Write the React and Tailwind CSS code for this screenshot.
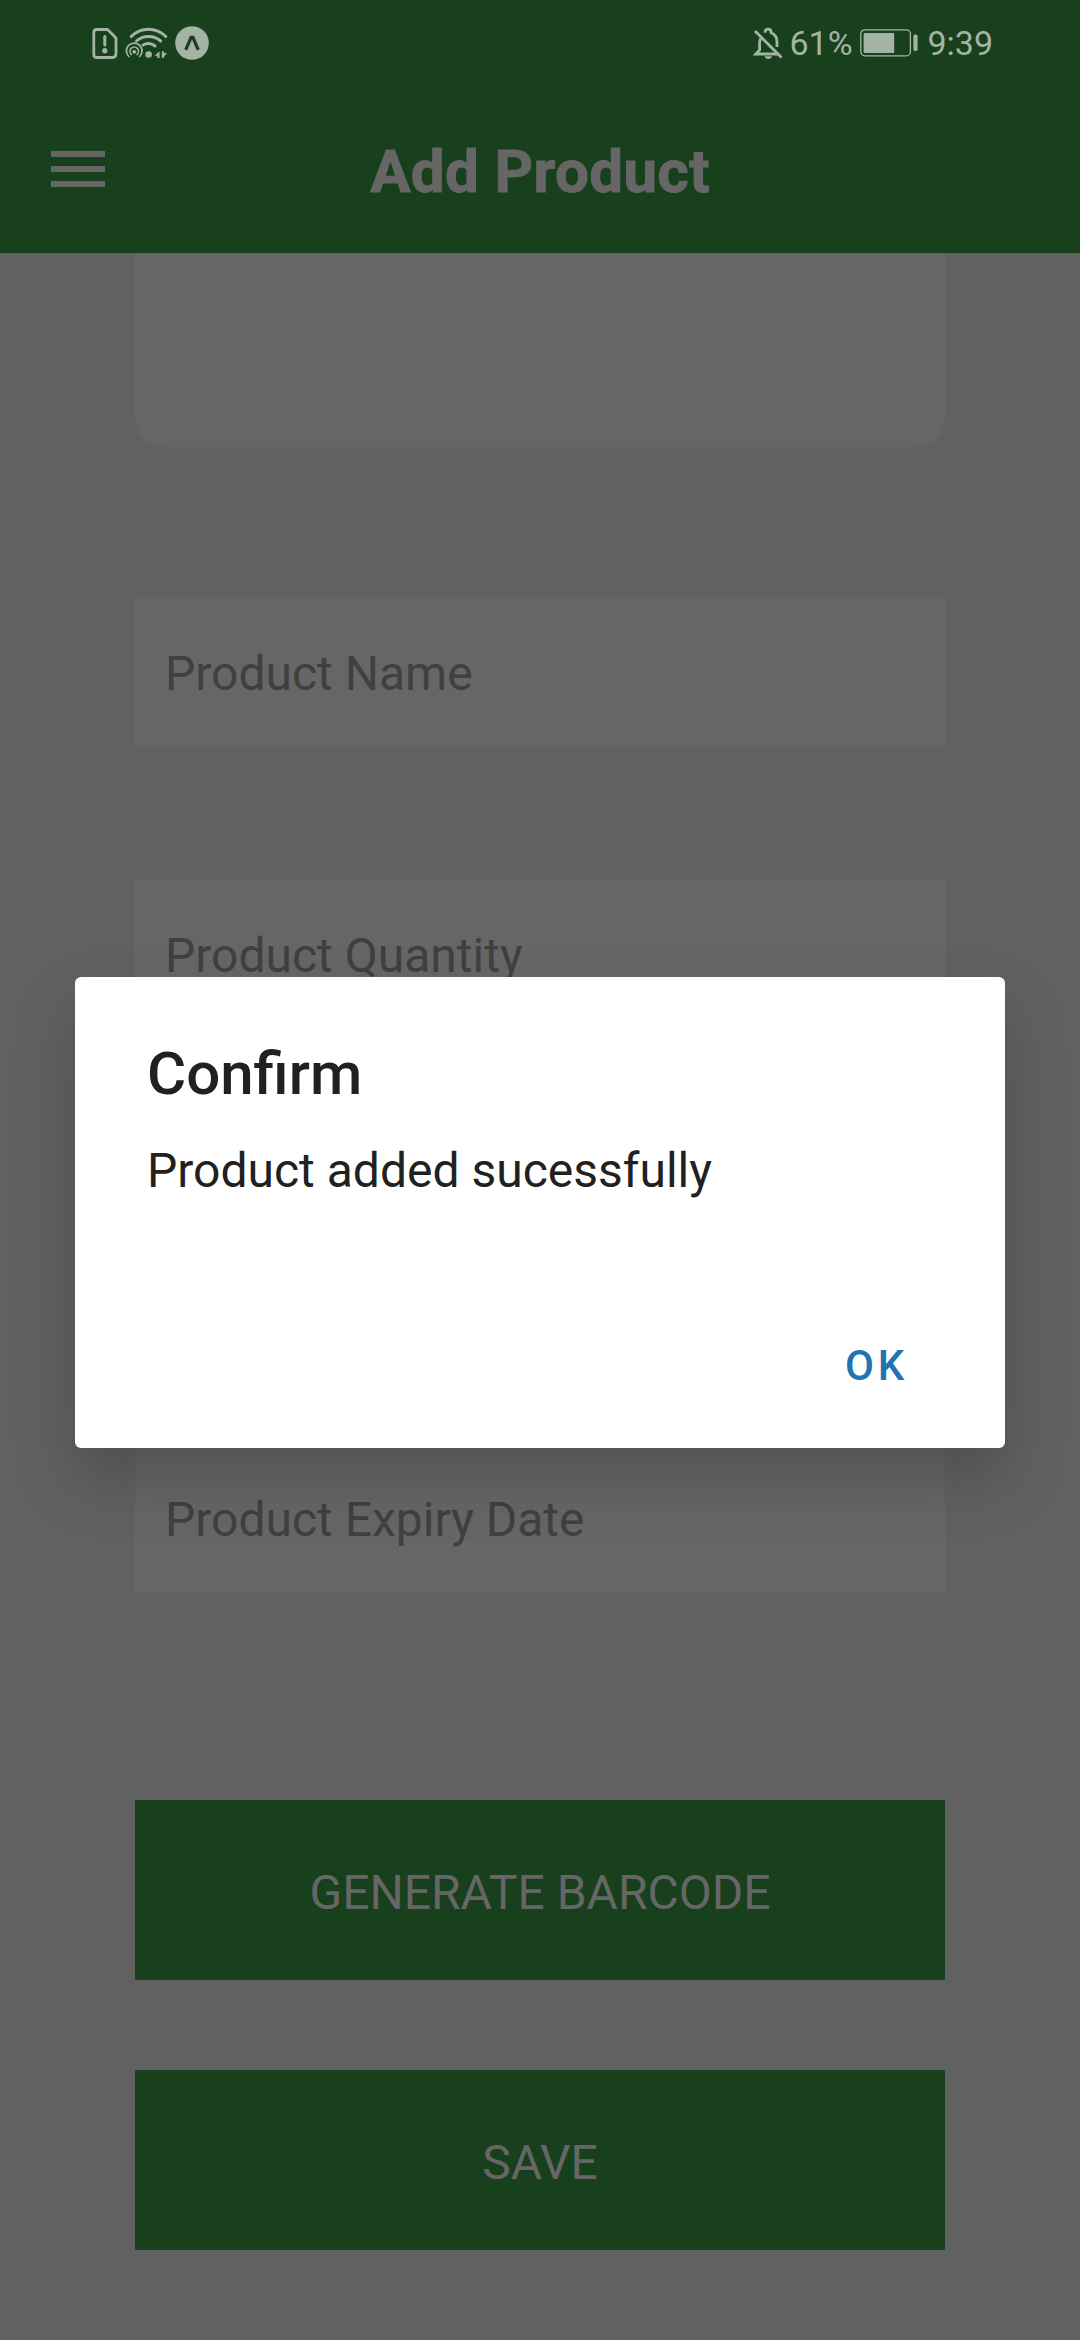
function FileAlertIcon() {
  return (
    <svg className="h-[33px] w-[27px]" viewBox="0 0 27 33" fill="none">
      <path d="M4.5 2.5H15.5L24 11V26.5Q24 30.5 20.5 30.5H4.5Q1.8 30.5 1.8 27.5V5.5Q1.8 2.5 4.5 2.5Z" stroke="#a3b3a5" strokeWidth="2.8" strokeLinejoin="round" />
      <path d="M12.8 9.5V18" stroke="#a3b3a5" strokeWidth="3" strokeLinecap="round" />
      <circle cx="12.8" cy="23.7" r="2.6" fill="#a3b3a5" />
    </svg>
  );
}

function WifiIcon() {
  return (
    <svg className="ml-1.5 h-[34px] w-[44px]" viewBox="0 0 44 34" fill="none" stroke="#a3b3a5" strokeLinecap="round">
      <path d="M6.2 10.5Q13.5 3.2 23.5 3.2Q33.5 3.2 40.8 10.5" strokeWidth="3" />
      <path d="M11.5 15Q16.5 10.5 23.5 10.5Q30.5 10.5 35.7 15" strokeWidth="3" />
      <path d="M18 19Q20.5 17.5 23.5 17.5Q27 17.5 30 20" strokeWidth="3" />
      <path d="M3.8 30.5A7.8 7.8 0 1 1 14.6 30.5" strokeWidth="1.7" />
      <path d="M6.4 28.6A4.3 4.3 0 1 1 12 28.6" strokeWidth="1.5" />
      <circle cx="9.2" cy="25.8" r="1.9" fill="#a3b3a5" stroke="none" />
      <circle cx="23.6" cy="28.5" r="3.3" fill="#a3b3a5" stroke="none" />
      <path d="M34.6 25.2V32H32.4V29.8H29.4ZM36.8 32V25.2H38.8V27H42L38.8 31V32Z" fill="#a3b3a5" stroke="none" />
    </svg>
  );
}

function ExpoIcon() {
  return (
    <svg className="ml-1.5 h-[34px] w-[34px]" viewBox="0 0 35 35" fill="none">
      <circle cx="17.5" cy="17.5" r="17.3" fill="#a3b3a5" />
      <path d="M11 24.6L16.6 11.8H18.4L24 24.6" stroke="#18401d" strokeWidth="3.4" />
    </svg>
  );
}

function BellOffIcon() {
  return (
    <svg className="h-[33px] w-[30px]" viewBox="0 0 30 33" fill="none" stroke="#a3b3a5" strokeWidth="2.8">
      <path d="M2 4L28.5 30.5" />
      <path d="M12 5.8Q12 2.2 15.2 2.2Q18.2 2.2 18.2 5.8Q24 8.2 24 15V20" />
      <path d="M7.8 11.5Q6.6 13.5 6.6 16V23L2.8 27H25" />
      <path d="M11.5 29.3H19Q18.2 32 15.2 32Q12.3 32 11.5 29.3Z" fill="#a3b3a5" stroke="none" />
    </svg>
  );
}

function BatteryIcon() {
  return (
    <svg className="h-[28px] w-[59px]" viewBox="0 0 59 28" fill="none">
      <rect x="0.8" y="0.8" width="49.6" height="26" rx="4" stroke="#a3b3a5" strokeWidth="1.3" />
      <rect x="3.6" y="4" width="30.6" height="20" rx="1" fill="#a3b3a5" />
      <rect x="53.4" y="5.6" width="4.2" height="16.4" rx="1.8" fill="#a3b3a5" />
    </svg>
  );
}

function StatusBar() {
  return (
    <div className="flex h-[86px] items-center justify-between pr-[87px] pl-[92px] text-[34px] leading-none text-[#a3b3a5]">
      <div className="flex items-center">
        <FileAlertIcon />
        <WifiIcon />
        <ExpoIcon />
      </div>
      <div className="flex items-center">
        <BellOffIcon />
        <span className="ml-1.5 w-[63px] whitespace-nowrap">61%</span>
        <span className="ml-2">
          <BatteryIcon />
        </span>
        <span className="ml-2 whitespace-nowrap">9:39</span>
      </div>
    </div>
  );
}

function Header() {
  return (
    <header className="h-[253px] shrink-0 bg-[#18401d]">
      <StatusBar />
      <div className="grid h-[167px] grid-cols-[1fr_auto_1fr] pl-[51px] pr-[51px]">
        <div className="mt-[65px] flex h-9 w-[54px] flex-col justify-between">
          <span className="h-1.5 bg-[#666666]" />
          <span className="h-1.5 bg-[#666666]" />
          <span className="h-1.5 bg-[#666666]" />
        </div>
        <h1 className="mt-[51px] text-[60px] leading-[70px] font-bold tracking-[0.4px] text-[#666666] [-webkit-text-stroke:1px_#666666]">Add Product</h1>
      </div>
    </header>
  );
}

function Field({ label }) {
  return (
    <div className="flex h-[150px] items-center bg-[#666666] pt-1 pl-[30px] text-[48px] leading-[56px] text-[#404040]">
      <span>{label}</span>
    </div>
  );
}

function ActionButton({ label }) {
  return (
    <button className="flex h-[180px] items-center justify-center bg-[#18401d] pt-1.5 text-[48px] leading-[56px] text-[#666666]">
      {label}
    </button>
  );
}

function ConfirmDialog() {
  return (
    <div className="absolute inset-0 flex justify-center pt-[977px]">
      <div role="dialog" className="flex h-[471px] w-[930px] flex-col rounded-md bg-white px-[72px] shadow-[0_31px_64px_0_rgba(0,0,0,0.19)]">
        <h2 className="mt-[62px] text-[60px] leading-[70px] font-medium text-[#212121]">Confirm</h2>
        <p className="mt-[34px] text-[48px] leading-[56px] text-[#212121]">Product added sucessfully</p>
        <button className="mt-[142px] mr-[25px] self-end text-[42px] leading-[50px] font-medium tracking-[3.8px] text-[#2074b3]">OK</button>
      </div>
    </div>
  );
}

export default function App() {
  return (
    <div className="relative flex h-[2340px] w-[1080px] flex-col overflow-hidden bg-[#616161] font-['Roboto',sans-serif]">
      <Header />
      <main className="flex flex-col px-[135px]">
        <div className="h-[194px] rounded-b-[30px] bg-[#666666]" />
        <div className="mt-[150px] flex flex-col gap-[132px]">
          <Field label="Product Name" />
          <Field label="Product Quantity" />
          <Field label="" />
          <Field label="Product Expiry Date" />
        </div>
        <div className="mt-[207px] flex flex-col gap-[90px]">
          <ActionButton label="GENERATE BARCODE" />
          <ActionButton label="SAVE" />
        </div>
      </main>
      <ConfirmDialog />
    </div>
  );
}
